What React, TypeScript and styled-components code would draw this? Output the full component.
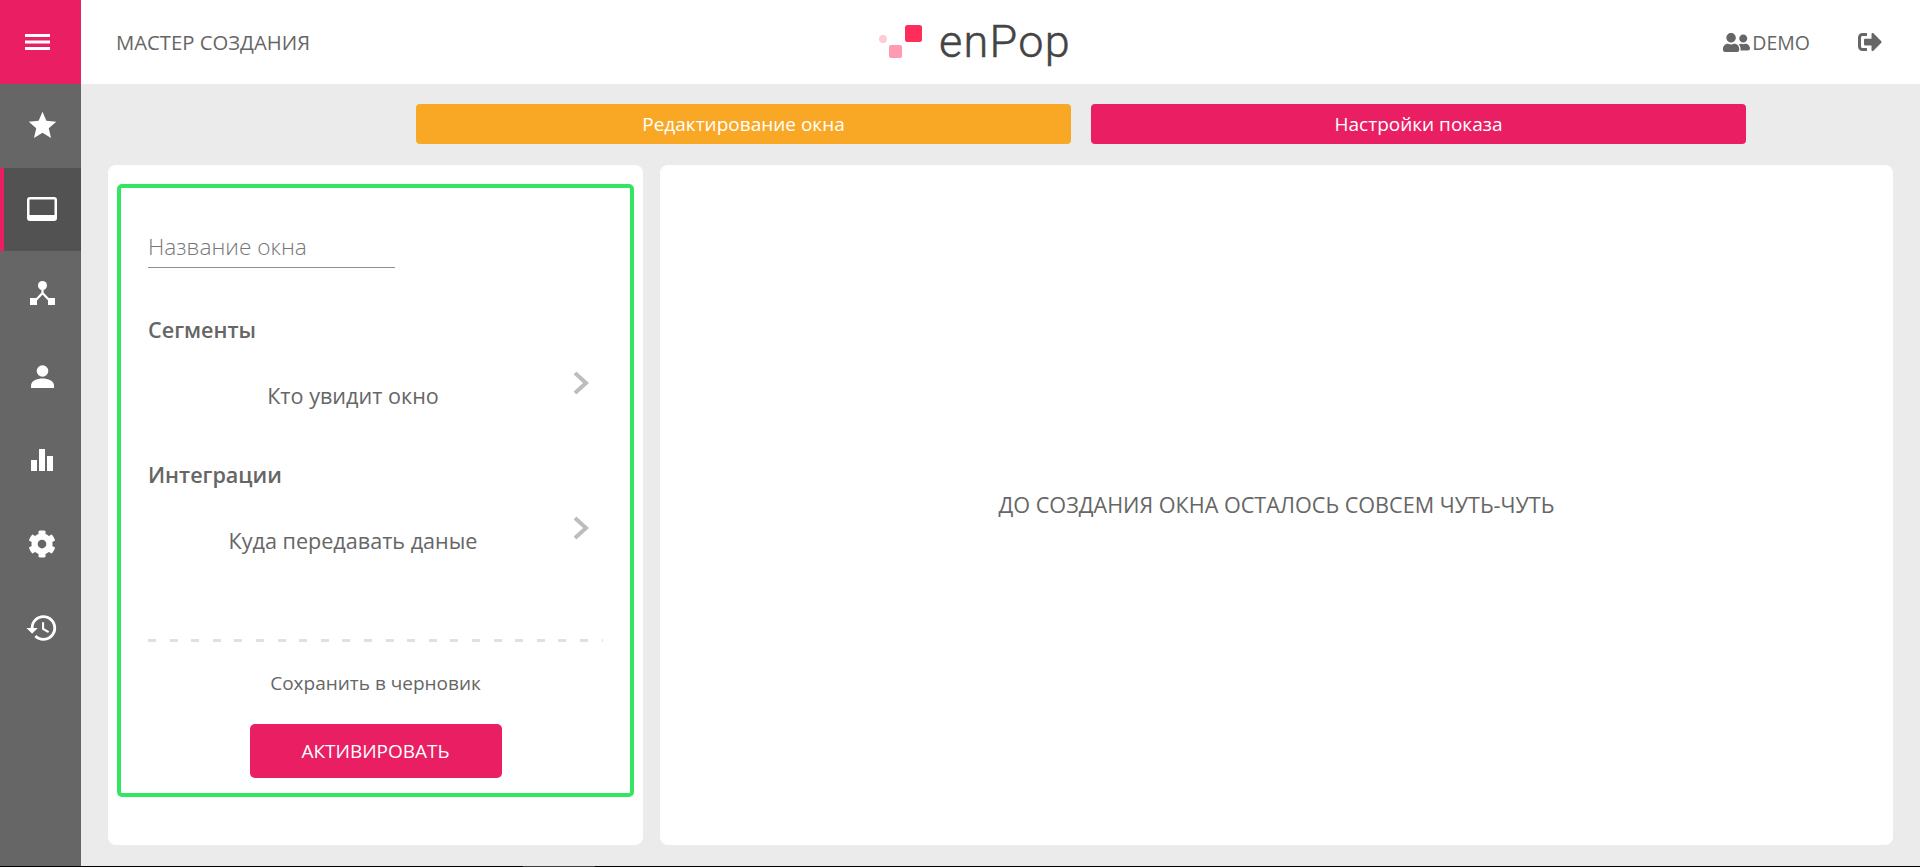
import React from "react";
import styled, { createGlobalStyle } from "styled-components";
import { FaCog, FaSignOutAlt, FaUserFriends } from "react-icons/fa";
import { MdHistory, MdStar } from "react-icons/md";

const GlobalStyle = createGlobalStyle`
  html, body { margin: 0; padding: 0; height: 100%; }
  body {
    font-family: "Open Sans", "Noto Sans", sans-serif;
    color: #666;
    overflow: hidden;
  }
  * { box-sizing: border-box; }
`;

const Screen = styled.div`
  display: flex;
  flex-direction: column;
  height: 867px;
  background: #000;
`;

const Shell = styled.div`
  display: flex;
  height: 866px;
  background: #ebebeb;
`;

const BottomEdge = styled.div`
  height: 1px;
  background: #000;
  padding-left: 523px;
`;

const EdgeMark = styled.div`
  width: 72px;
  height: 1px;
  background: #3d3d3d;
`;

const Sidebar = styled.nav`
  width: 81px;
  flex: none;
  background: #666;
  display: flex;
  flex-direction: column;
`;

const MenuButton = styled.button`
  height: 84px;
  border: 0;
  padding: 0 6px 0 0;
  background: #e91e63;
  display: flex;
  align-items: center;
  justify-content: center;
`;

const NavItem = styled.a<{ $active?: boolean }>`
  height: 83.67px;
  padding-left: 3px;
  display: flex;
  align-items: center;
  justify-content: center;
  color: #fff;
  background: ${(p) => (p.$active ? "#525252" : "transparent")};
  box-shadow: ${(p) => (p.$active ? "inset 4px 0 0 #e91e63" : "none")};
`;

const Main = styled.div`
  flex: 1;
  min-width: 0;
  display: flex;
  flex-direction: column;
`;

const Header = styled.header`
  height: 84px;
  flex: none;
  background: #fff;
  display: grid;
  grid-template-columns: 1fr auto 1fr;
  align-items: center;
  padding: 0 38px 0 35px;
`;

const PageTitle = styled.div`
  font-size: 20.3px;
  line-height: 24px;
  color: #666;
`;

const Logo = styled.div`
  display: flex;
  align-items: center;
  gap: 16px;
  margin-right: 48px;
`;

const LogoMark = styled.svg`
  width: 44px;
  height: 34px;
  display: block;
`;

const LogoText = styled.span`
  font-family: Roboto, sans-serif;
  font-weight: 300;
  font-size: 45px;
  line-height: 56px;
  letter-spacing: 1.3px;
  -webkit-text-stroke: 0.5px #444;
  color: #444;
`;

const HeaderActions = styled.div`
  display: flex;
  justify-content: flex-end;
  align-items: center;
  gap: 48px;
`;

const UserBadge = styled.div`
  display: flex;
  align-items: center;
  gap: 2px;
  font-size: 19.5px;
  color: #666;
`;

const ExitLink = styled.a`
  display: flex;
  color: #666;
`;

const Content = styled.div`
  flex: 1;
  display: flex;
  flex-direction: column;
  padding: 20px 27px 21px;
`;

const Tabs = styled.div`
  display: flex;
  gap: 20px;
  padding-left: 308px;
  margin-bottom: 21px;
`;

const Tab = styled.button<{ $color: string }>`
  width: 655px;
  height: 40px;
  border: 0;
  border-radius: 4px;
  background: ${(p) => p.$color};
  color: #fff;
  font-family: inherit;
  font-size: 19px;
`;

const Columns = styled.div`
  flex: 1;
  display: flex;
  gap: 17px;
`;

const Card = styled.section`
  background: #fff;
  border-radius: 8px;
`;

const LeftCard = styled(Card)`
  width: 535px;
  flex: none;
  padding: 19px 9px 48px;
`;

const RightCard = styled(Card)`
  flex: 1;
  display: flex;
  align-items: center;
  justify-content: center;
  padding-bottom: 2px;
  font-size: 21.6px;
  color: #666;
`;

const Wizard = styled.div`
  height: 613px;
  border: 4px solid #34e562;
  border-radius: 5px;
  padding: 45px 27px 15px;
  display: flex;
  flex-direction: column;
`;

const NameInput = styled.input`
  width: 247px;
  height: 35px;
  flex: none;
  border: 0;
  border-bottom: 1px solid #8f8f8f;
  padding: 0 0 8px;
  outline: none;
  font-family: inherit;
  font-size: 22.7px;
  font-weight: 300;
  margin-bottom: 50px;
  &::placeholder { color: #777; opacity: 1; }
`;

const Section = styled.div`
  height: 145px;
  flex: none;
`;

const SectionTitle = styled.div`
  font-size: 21.6px;
  font-weight: 600;
  line-height: 24px;
  color: #666;
`;

const PickerRow = styled.div`
  display: flex;
  align-items: flex-start;
  padding-right: 14px;
`;

const PickerLabel = styled.div`
  flex: 1;
  margin-top: 42px;
  padding-right: 15px;
  text-align: center;
  font-size: 21.6px;
  line-height: 24px;
  color: #666;
`;

const Chevron = styled.svg`
  width: 16px;
  height: 24px;
  margin-top: 29px;
  color: #bdbdbd;
  flex: none;
`;

const DashedRule = styled.div`
  height: 3px;
  margin-top: 31px;
  flex: none;
  background: repeating-linear-gradient(to right, #e0e0e0 0 8px, transparent 8px 21.6px);
`;

const DraftLink = styled.a`
  margin-top: 29px;
  text-align: center;
  font-size: 19px;
  line-height: 24px;
  color: #666;
`;

const ActivateButton = styled.button`
  align-self: center;
  width: 252px;
  height: 54px;
  margin-top: 29px;
  flex: none;
  border: 0;
  border-radius: 5px;
  background: #e91e63;
  color: #fff;
  font-family: inherit;
  font-size: 19px;
`;

function BurgerIcon() {
  return (
    <svg width="25" height="16" viewBox="0 0 25 16" fill="#fff">
      <rect y="0" width="25" height="3" />
      <rect y="6.5" width="25" height="3" />
      <rect y="13" width="25" height="3" />
    </svg>
  );
}

function MonitorIcon() {
  return (
    <svg width="30" height="24" viewBox="0 0 30 24" fill="#fff">
      <path
        fillRule="evenodd"
        d="M3 0h24a3 3 0 0 1 3 3v18a3 3 0 0 1-3 3H3a3 3 0 0 1-3-3V3a3 3 0 0 1 3-3zM2.500 2.500v15.500h25V2.500z"
      />
    </svg>
  );
}

function HubIcon() {
  return (
    <svg width="25" height="24" viewBox="0 0 25 24" fill="#fff">
      <circle cx="12.500" cy="4.500" r="4.500" />
      <path d="M12.500 8v4L5 20M12.500 12l7.500 8" stroke="#fff" strokeWidth="2.200" fill="none" />
      <rect x="0" y="17" width="7" height="7" />
      <rect x="18" y="17" width="7" height="7" />
    </svg>
  );
}

function PersonIcon() {
  return (
    <svg width="23" height="23" viewBox="0 0 23 23" fill="#fff">
      <circle cx="11.500" cy="6" r="5.800" />
      <path d="M0 23v-2.500C0 16 6 13.500 11.500 13.500S23 16 23 20.500V23z" />
    </svg>
  );
}

function BarsIcon() {
  return (
    <svg width="22" height="22" viewBox="0 0 22 22" fill="#fff">
      <rect x="0" y="11" width="6" height="11" />
      <rect x="8" y="0" width="6" height="22" />
      <rect x="16" y="7" width="6" height="15" />
    </svg>
  );
}

function ChevronIcon() {
  return (
    <Chevron viewBox="0 0 16 24" fill="none">
      <path d="M2 2l11 10L2 22" stroke="currentColor" strokeWidth="4" />
    </Chevron>
  );
}

export default function App() {
  return (
    <Screen>
      <GlobalStyle />
      <Shell>
        <Sidebar>
          <MenuButton>
            <BurgerIcon />
          </MenuButton>
          <NavItem>
            <MdStar size={33} />
          </NavItem>
          <NavItem $active>
            <MonitorIcon />
          </NavItem>
          <NavItem>
            <HubIcon />
          </NavItem>
          <NavItem>
            <PersonIcon />
          </NavItem>
          <NavItem>
            <BarsIcon />
          </NavItem>
          <NavItem>
            <FaCog size={28} />
          </NavItem>
          <NavItem>
            <MdHistory size={34} />
          </NavItem>
        </Sidebar>
        <Main>
          <Header>
            <PageTitle>МАСТЕР СОЗДАНИЯ</PageTitle>
            <Logo>
              <LogoMark viewBox="0 0 44 34">
                <circle cx="4" cy="14" r="4" fill="#ffccd6" />
                <rect x="10" y="20" width="13" height="13" rx="2" fill="#ff9bb0" />
                <rect x="26" y="0" width="17" height="17" rx="2.500" fill="#ff2d5a" />
              </LogoMark>
              <LogoText>enPop</LogoText>
            </Logo>
            <HeaderActions>
              <UserBadge>
                <FaUserFriends size={27} />
                DEMO
              </UserBadge>
              <ExitLink>
                <FaSignOutAlt size={24} />
              </ExitLink>
            </HeaderActions>
          </Header>
          <Content>
            <Tabs>
              <Tab $color="#f9a825">Редактирование окна</Tab>
              <Tab $color="#e91e63">Настройки показа</Tab>
            </Tabs>
            <Columns>
              <LeftCard>
                <Wizard>
                  <NameInput placeholder="Название окна" />
                  <Section>
                    <SectionTitle>Сегменты</SectionTitle>
                    <PickerRow>
                      <PickerLabel>Кто увидит окно</PickerLabel>
                      <ChevronIcon />
                    </PickerRow>
                  </Section>
                  <Section>
                    <SectionTitle>Интеграции</SectionTitle>
                    <PickerRow>
                      <PickerLabel>Куда передавать даные</PickerLabel>
                      <ChevronIcon />
                    </PickerRow>
                  </Section>
                  <DashedRule />
                  <DraftLink>Сохранить в черновик</DraftLink>
                  <ActivateButton>АКТИВИРОВАТЬ</ActivateButton>
                </Wizard>
              </LeftCard>
              <RightCard>ДО СОЗДАНИЯ ОКНА ОСТАЛОСЬ СОВСЕМ ЧУТЬ-ЧУТЬ</RightCard>
            </Columns>
          </Content>
        </Main>
      </Shell>
      <BottomEdge>
        <EdgeMark />
      </BottomEdge>
    </Screen>
  );
}
